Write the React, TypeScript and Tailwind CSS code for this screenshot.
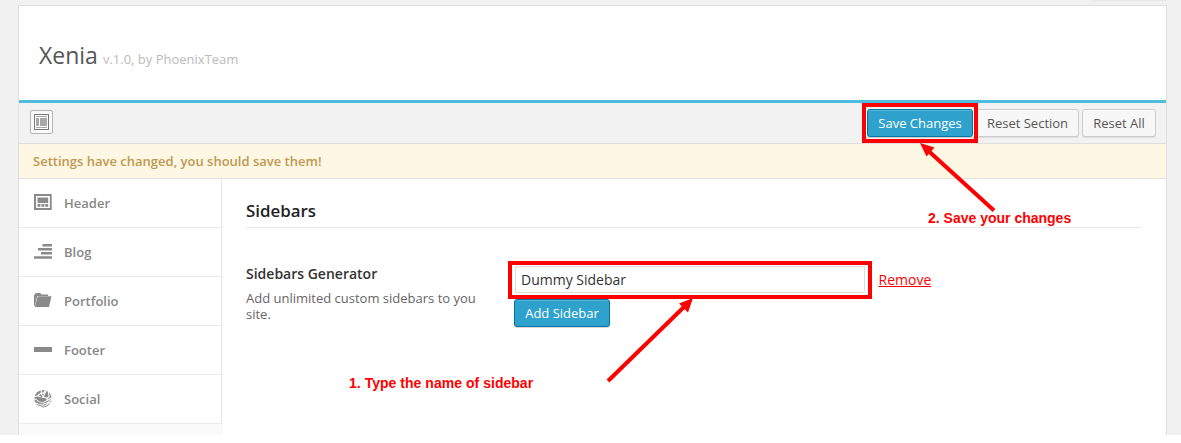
import type { ReactNode } from "react";

const HeaderIcon = () => (
  <svg width="18" height="18" viewBox="0 0 18 18" fill="#8a8a8a">
    <path fillRule="evenodd" d="M0 0h17.700v16H0zM2 2v12h13.900V2z" />
    <path d="M3.500 3.500h10.700V9H3.500zM3.500 10h2.900v2.800H3.500zM7.400 10h2.900v2.800H7.400zM11.200 10h3v2.800h-3z" />
  </svg>
);
const BlogIcon = () => (
  <svg width="18" height="18" viewBox="0 0 18 18" fill="#8a8a8a">
    <path d="M8.500 1H18v2.500H8.500zM4 5h14v2.500H4zM7 9h11v2.500H7zM0 13.200h18v2.600H0z" />
  </svg>
);
const FolderIcon = () => (
  <svg width="18" height="18" viewBox="0 0 18 18" fill="#8a8a8a">
    <path d="M0 3.200.9 2.300 1.800 1h4.500l1 1.400h6.500l.6 1.500H3.200L.9 13.500H0z" />
    <path d="M3.800 4.300h13.700L15 14.900H.7z" />
  </svg>
);
const FooterIcon = () => (
  <svg width="18" height="18" viewBox="0 0 18 18" fill="#8a8a8a">
    <path d="M0 6h18v5H0z" />
  </svg>
);
const SocialIcon = () => (
  <svg width="18" height="18" viewBox="0 0 18 18">
    <circle cx="9" cy="8.700" r="8.700" fill="#8a8a8a" />
    <path
      d="M0 6.800 3.500 5.800 7.500 7.500 9.500 7.300M3.500 5.800 7 3.300M7.300 0 7.300 3.800 9.500 7.300M7.300 2.500 9.300 3.500 11 .5M12.500 0 10.300 4.500 9.500 7.300 13 8.300 15.300 6.500 14.300 2M0 9 2.500 9.500 5 11.700 9.500 12.300 13 10.500 13 8.300M0 12.500 4 14 9 14.300 13.500 12.800 18 9M13 10.500 18 7.500M1.500 16 6 16.200 11 15.700 17 12"
      stroke="#fff"
      strokeWidth="1.100"
      fill="none"
    />
    <path d="M2.500 9.200 6.800 7.200 12.200 8.800 12 10.500 8.500 12 5 11.300z" fill="#8a8a8a" />
  </svg>
);
const LayoutIcon = () => (
  <svg width="15" height="16" viewBox="0 0 15 16" shapeRendering="crispEdges">
    <rect x=".5" y=".5" width="14" height="15" fill="#fff" stroke="#777" />
    <path d="M2 2h11v1H2zM2 4h3v8H2zM6 4h7v8H6zM2 13h11v1H2z" fill="#a7a7a7" />
  </svg>
);

const items: [string, ReactNode][] = [
  ["Header", <HeaderIcon />],
  ["Blog", <BlogIcon />],
  ["Portfolio", <FolderIcon />],
  ["Footer", <FooterIcon />],
  ["Social", <SocialIcon />],
];

const primary =
  "h-7 rounded-[3px] border border-[#0074a2] bg-[#2ea2cc] px-2.5 text-[13px] leading-[26px] whitespace-nowrap text-white shadow-[inset_0_1px_0_rgba(120,200,230,0.5),0_1px_0_rgba(0,0,0,0.15)]";
const secondary =
  "h-7 rounded-[3px] border border-[#ccc] bg-[#f7f7f7] text-[13px] leading-[26px] whitespace-nowrap text-[#555] shadow-[inset_0_1px_0_#fff,0_1px_0_rgba(0,0,0,0.08)]";

export default function App() {
  return (
    <div className="relative h-[443px] w-[1181px] overflow-hidden bg-white font-['Open_Sans',sans-serif] text-[13px]">
      <div className="flex h-[435px] flex-col bg-[#f1f1f1] pr-[14px] pl-[18px]">
        <div className="flex h-[5px] shrink-0 justify-end">
          <div className="h-px w-[76px] rounded-b bg-[#e8e8e8]" />
        </div>
        <div className="flex grow flex-col border border-b-0 border-[#dedede] bg-white">
          <header className="flex h-[97px] shrink-0 items-baseline gap-[5px] border-b-[3px] border-[#4fbbdd] pt-[33px] pl-5">
            <h1 className="text-[23px] leading-[32px] text-[#555]">Xenia</h1>
            <span className="text-[13px] text-[#bbb]">v.1.0, by PhoenixTeam</span>
          </header>
          <div className="flex h-[41px] shrink-0 items-start justify-between border-b border-[#dedede] bg-[#f2f2f2] pt-1.5 pr-2.5 pl-[11px]">
            <button className="mt-px flex h-6 w-[23px] items-center justify-center rounded-[2px] border border-[#b5b5b5] bg-[#fafafa]">
              <LayoutIcon />
            </button>
            <div className="flex">
              <button className={`${primary} w-[106px]`}>Save Changes</button>
              <button className={`${secondary} ml-[3px] w-[103px]`}>Reset Section</button>
              <button className={`${secondary} ml-[3px] w-[74px]`}>Reset All</button>
            </div>
          </div>
          <div className="h-[35px] shrink-0 border-b border-[#e2e2e2] bg-[#fdf7e3] pl-3.5 text-[13px] leading-[34px] font-semibold text-[#c09853]">
            Settings have changed, you should save them!
          </div>
          <div className="flex grow">
            <nav className="w-[204px] shrink-0 bg-[#fafafa]">
              {items.map(([name, icon]) => (
                <div
                  key={name}
                  className="flex h-[49px] w-[203px] items-center border-r border-b border-[#ebebeb] bg-white pl-[15px] font-semibold text-[#888]"
                >
                  <span className="mr-3 w-[18px]">{icon}</span>
                  <span className="pt-0.5">{name}</span>
                </div>
              ))}
            </nav>
            <main className="grow pt-5 pr-[25px] pl-[23px]">
              <h2 className="h-[29px] border-b border-[#ebebeb] text-[16.9px] leading-6 font-semibold text-[#222]">
                Sidebars
              </h2>
              <div className="flex pt-[38px]">
                <div className="w-[268px] pr-[26px]">
                  <div className="text-[14px] leading-[15px] font-semibold text-[#333]">Sidebars Generator</div>
                  <p className="mt-[9px] text-[13px] leading-4 text-[#666]">
                    Add unlimited custom sidebars to you site.
                  </p>
                </div>
                <div className="text-[14px]">
                  <div className="flex items-center pl-px">
                    <div className="h-[27px] w-[350px] border border-[#ddd] bg-white pl-[5px] leading-[26px] text-[#333] shadow-[inset_0_1px_2px_rgba(0,0,0,0.07)]">
                      Dummy Sidebar
                    </div>
                    <a className="ml-[13.500px] text-[14px] text-[#f00] underline">Remove</a>
                  </div>
                  <button className={`${primary} mt-1.5 w-24`}>Add Sidebar</button>
                </div>
              </div>
            </main>
          </div>
        </div>
      </div>

      <div className="absolute top-[103px] left-[862px] h-10 w-[116px] border-4 border-[#f00]" />
      <div className="absolute top-[261px] left-[508px] h-[38px] w-[364px] border-4 border-[#f00]" />
      <svg className="absolute top-0 left-0" width="1181" height="443" fill="#f00" stroke="#f00">
        <path d="M994 210.500 928 150.500M608 381 686 305" strokeWidth="4" />
        <path stroke="none" d="M920 143 934.500 147.500 926.500 156.500zM693 298 688 312.500 679 303.500z" />
      </svg>
      <div className="absolute top-[210px] left-[928px] font-['Liberation_Sans',sans-serif] text-[14px] leading-4 font-bold whitespace-nowrap text-[#f00]">
        2. Save your changes
      </div>
      <div className="absolute top-[375px] left-[349px] font-['Liberation_Sans',sans-serif] text-[14px] leading-4 font-bold tracking-[0.03px] whitespace-nowrap text-[#f00]">
        1. Type the name of sidebar
      </div>
    </div>
  );
}
